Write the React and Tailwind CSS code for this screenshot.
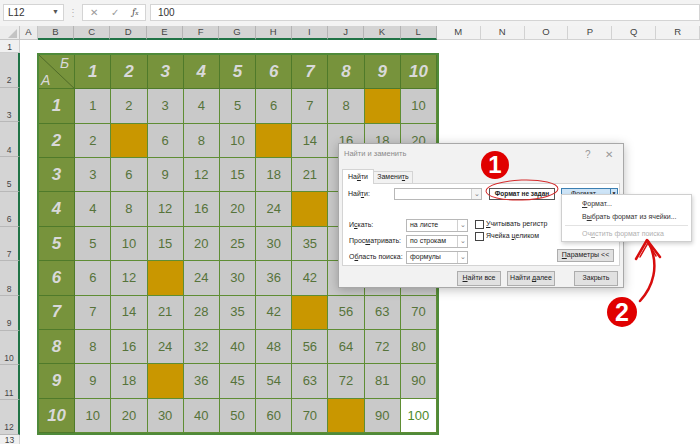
import React from 'react';

const mustard = new Set(['1-9', '2-2', '2-6', '4-7', '6-3', '7-7', '9-3', '10-8']);
const selCols = ['B', 'C', 'D', 'E', 'F', 'G', 'H', 'I', 'J', 'K', 'L'];
const restCols = ['M', 'N', 'O', 'P', 'Q', 'R'];

function FormulaBar() {
  return (
    <div className="h-[26px] bg-[#f3f3f3] flex items-start pt-[4px] text-[#333]">
      <div className="ml-[3px] w-[61px] h-[17px] bg-white border border-[#d4d4d4] flex items-center justify-between px-[4px] text-[10px]">
        <span>L12</span>
        <span className="text-[7px] text-[#555]">▼</span>
      </div>
      <div className="w-[18px] h-[17px] flex items-center justify-center text-[10px] text-[#b0b0b0]">⋮</div>
      <div className="w-[64px] h-[17px] bg-white border border-[#d4d4d4] flex items-center justify-around text-[#9a9a9a] text-[10px]">
        <span>✕</span>
        <span>✓</span>
        <span className="italic font-serif text-[#555]">f<span className="text-[7px]">x</span></span>
      </div>
      <div className="ml-[4px] flex-1 h-[17px] bg-white border border-[#d4d4d4] flex items-center pl-[7px] text-[10px]">100</div>
    </div>
  );
}

function ColumnHeaders() {
  return (
    <div className="flex h-[14px] text-[9.5px] text-[#444]">
      <div className="w-[20px] bg-[#ececec] border-r border-b border-[#c6c6c6] relative">
        <svg width="20" height="14" className="absolute inset-0">
          <polygon points="17,3 17,12 8,12" fill="#c4c4c4" />
        </svg>
      </div>
      <div className="w-[18px] bg-[#ececec] border-r border-b border-[#c6c6c6] flex items-center justify-center">A</div>
      {selCols.map((c) => (
        <div key={c} className="w-[36.36px] bg-[#d4d4d4] border-r border-[#b4b4b4] border-b-2 border-b-[#217346] flex items-center justify-center">
          {c}
        </div>
      ))}
      {restCols.map((c) => (
        <div key={c} className="w-[44px] bg-[#f2f2f2] border-r border-b border-[#d2d2d2] flex items-center justify-center">
          {c}
        </div>
      ))}
    </div>
  );
}

function RowHeaders() {
  const rows = [2, 3, 4, 5, 6, 7, 8, 9, 10, 11, 12];
  return (
    <div className="w-[20px] flex flex-col text-[8.5px] text-[#444]">
      <div className="h-[13px] bg-[#f0f0f0] border-b border-r border-[#d0d0d0] flex items-end justify-center leading-none pb-[1px]">1</div>
      {rows.map((r) => (
        <div key={r} className="h-[34.73px] bg-[#d4d4d4] border-b border-[#b8b8b8] border-r-2 border-r-[#217346] flex items-end justify-center pb-[2px] leading-none">
          {r}
        </div>
      ))}
      <div className="h-[12px] bg-[#f0f0f0] border-r border-[#d0d0d0] flex items-start justify-center leading-none pt-[1px]">13</div>
    </div>
  );
}

function Table() {
  const cells = [];
  cells.push(
    <div key="corner" className="relative bg-[#77933c] border-r border-b border-[#4f7a2a] italic text-[#d9d9d9] text-[14px]">
      <svg className="absolute inset-0 w-full h-full" viewBox="0 0 36 34" preserveAspectRatio="none">
        <line x1="0" y1="0" x2="36" y2="34" stroke="#4f6a28" strokeWidth="1" />
      </svg>
      <span className="absolute right-[5px] top-[1px] leading-none">Б</span>
      <span className="absolute left-[2px] bottom-[1px] leading-none">А</span>
    </div>
  );
  for (let c = 1; c <= 10; c++) {
    cells.push(
      <div key={'h' + c} className="bg-[#77933c] border-r border-b border-[#4f7a2a] flex items-center justify-center italic font-bold text-[17px] text-[#d9d9d9]">
        {c}
      </div>
    );
  }
  for (let r = 1; r <= 10; r++) {
    cells.push(
      <div key={'r' + r} className="bg-[#77933c] border-r border-b border-[#4f7a2a] flex items-center justify-center italic font-bold text-[17px] text-[#d9d9d9]">
        {r}
      </div>
    );
    for (let c = 1; c <= 10; c++) {
      const key = r + '-' + c;
      const isM = mustard.has(key);
      const isActive = r === 10 && c === 10;
      const bg = isM ? 'bg-[#c99700]' : isActive ? 'bg-white' : 'bg-[#c9c9c9]';
      cells.push(
        <div key={key} className={`${bg} border-r border-b border-[#5f8d34] flex items-center justify-center text-[13px] ${isActive ? 'text-[#4e8a2a]' : 'text-[#56733a]'}`}>
          {isM ? '' : r * c}
        </div>
      );
    }
  }
  return (
    <div className="w-[402px] h-[382px] border-2 border-[#4f8a3a] grid grid-cols-[repeat(11,1fr)] grid-rows-[repeat(11,1fr)]">
      {cells}
    </div>
  );
}

function Select({ value }) {
  return (
    <div className="w-[62px] h-[13px] bg-white border border-[#b8b8b8] flex items-center">
      <span className="flex-1 pl-[3px] text-[#222] whitespace-nowrap">{value}</span>
      <span className="w-[10px] h-full border-l border-[#d0d0d0] flex items-center justify-center text-[#777] text-[7px]">⌄</span>
    </div>
  );
}

function Btn({ children, w }) {
  return (
    <div className={`${w} h-[15px] bg-[#e1e1e1] border border-[#adadad] flex items-center justify-center text-[#222] whitespace-nowrap`}>
      <span>{children}</span>
    </div>
  );
}

function Dialog() {
  return (
    <div className="absolute left-[338px] top-[143px] w-[286px] h-[145px] bg-[#f2f2f2] border border-[#a8a8a8] shadow-[0_2px_10px_rgba(0,0,0,0.25)] text-[7px] text-[#222] whitespace-nowrap">
      <div className="h-[20px] flex items-center pl-[5px] pr-[10px] text-[#8a8a8a] text-[7.5px]">
        <span className="flex-1">Найти и заменить</span>
        <span className="w-[20px] text-[10px] text-[#999]">?</span>
        <span className="w-[8px] text-[10px] text-[#999]">✕</span>
      </div>
      <div className="flex items-end pl-[3px] h-[17px] mt-[2px]">
        <div className="w-[32px] h-[15px] bg-white border border-[#d4d4d4] border-b-0 flex items-center justify-center relative top-[1px]">
          <span>На<u>й</u>ти</span>
        </div>
        <div className="w-[39px] h-[12px] bg-[#f2f2f2] border border-[#d4d4d4] border-l-0 border-b-0 flex items-center justify-center">
          <span>Замени<u>т</u>ь</span>
        </div>
      </div>
      <div className="mx-[3px] w-[278px] h-[83px] bg-white border border-[#d4d4d4] flex flex-col">
        <div className="flex items-center mt-[4px] h-[12px]">
          <span className="w-[51px] pl-[5px]">Най<u>т</u>и:</span>
          <div className="w-[88px] h-[12px] border border-[#b8b8b8] flex">
            <span className="flex-1" />
            <span className="w-[10px] h-full border-l border-[#d0d0d0] bg-[#f4f4f4] flex items-center justify-center text-[#777] text-[7px]">⌄</span>
          </div>
          <div className="ml-[7px] w-[66px] h-[12px] border border-[#555] flex items-center justify-center font-bold text-[6.5px]">
            Формат не задан
          </div>
          <div className="ml-[6px] w-[57px] h-[13px] bg-[#cde4f7] border border-[#3c7fb1] flex items-center">
            <span className="flex-1 text-center text-[7px]">Форма<u>т</u>...</span>
            <span className="w-[7px] h-full border-l border-[#3c7fb1] flex items-center justify-center text-[5px]">▼</span>
          </div>
        </div>
        <div className="flex mt-[19px]">
          <div className="flex flex-col gap-[3px] pl-[6px]">
            {[
              [<>И<u>с</u>кать:</>, 'на листе'],
              [<>Прос<u>м</u>атривать:</>, 'по строкам'],
              [<>О<u>б</u>ласть поиска:</>, 'формулы'],
            ].map(([l, v]) => (
              <div key={v} className="flex items-center h-[13px]">
                <span className="w-[57px]">{l}</span>
                <Select value={v} />
              </div>
            ))}
          </div>
          <div className="flex flex-col ml-[7px] gap-[2px]">
            <div className="flex items-center h-[10px]">
              <span className="w-[9px] h-[9px] border border-[#444] bg-white mr-[2px]" />
              <span><u>У</u>читывать регистр</span>
            </div>
            <div className="flex items-center h-[10px]">
              <span className="w-[9px] h-[9px] border border-[#444] bg-white mr-[2px]" />
              <span>Ячейка <u>ц</u>еликом</span>
            </div>
          </div>
          <div className="flex-1 flex items-end justify-end pr-[5px]">
            <div className="w-[57px] h-[13px] bg-[#e1e1e1] border border-[#adadad] flex items-center justify-center mb-[2px]">
              <span><u>П</u>араметры &lt;&lt;</span>
            </div>
          </div>
        </div>
      </div>
      <div className="flex justify-end items-center gap-[6px] pr-[5px] mt-[5px]">
        <Btn w="w-[44px]"><u>Н</u>айти все</Btn>
        <Btn w="w-[48px]">Найти <u>д</u>алее</Btn>
        <div className="w-[7px]" />
        <Btn w="w-[44px]">Закрыть</Btn>
      </div>
    </div>
  );
}

function Menu() {
  return (
    <div className="absolute left-[561px] top-[194px] w-[131px] h-[48px] bg-white border border-[#cfcfcf] shadow-[1px_2px_4px_rgba(0,0,0,0.18)] text-[7px] text-[#333] flex flex-col pt-[3px] whitespace-nowrap">
      <div className="h-[13px] flex items-center pl-[20px]"><span><u>Ф</u>ормат...</span></div>
      <div className="h-[13px] flex items-center pl-[20px]"><span>В<u>ы</u>брать формат из ячейки...</span></div>
      <div className="mx-[3px] my-[2px] border-t border-[#e2e2e2]" />
      <div className="h-[13px] flex items-center pl-[20px] text-[#b0b0b0]"><span>Оч<u>и</u>стить формат поиска</span></div>
    </div>
  );
}

function Annotations() {
  return (
    <>
      <svg className="absolute inset-0 pointer-events-none" width="700" height="444">
        <ellipse cx="522" cy="190" rx="36" ry="10" fill="none" stroke="#d42a2a" strokeWidth="1" transform="rotate(-2 522 190)" />
        <path d="M640 301 C652 288 661 266 648 241" fill="none" stroke="#d80d0d" strokeWidth="2.5" strokeLinecap="round" />
        <path d="M636 259 L647 240 L660 257" fill="none" stroke="#d80d0d" strokeWidth="2.5" strokeLinecap="round" strokeLinejoin="round" />
        <path d="M640 257 L648 243 L656 256" fill="none" stroke="#d80d0d" strokeWidth="1.5" strokeLinecap="round" />
      </svg>
      <div className="absolute left-[481px] top-[151px] w-[28px] h-[28px] rounded-full bg-[#e00000] flex items-center justify-center text-white font-bold text-[24px] leading-none">
        1
      </div>
      <div className="absolute left-[607px] top-[297px] w-[30px] h-[30px] rounded-full bg-[#e00000] flex items-center justify-center text-white font-bold text-[25px] leading-none">
        2
      </div>
    </>
  );
}

export default function App() {
  return (
    <div className="w-[700px] h-[444px] bg-white relative overflow-hidden" style={{ fontFamily: '"Liberation Sans", Arial, sans-serif' }}>
      <FormulaBar />
      <ColumnHeaders />
      <div className="flex">
        <RowHeaders />
        <div className="w-[17px]" />
        <div className="flex flex-col">
          <div className="h-[13px]" />
          <Table />
        </div>
      </div>
      <Dialog />
      <Menu />
      <Annotations />
    </div>
  );
}
